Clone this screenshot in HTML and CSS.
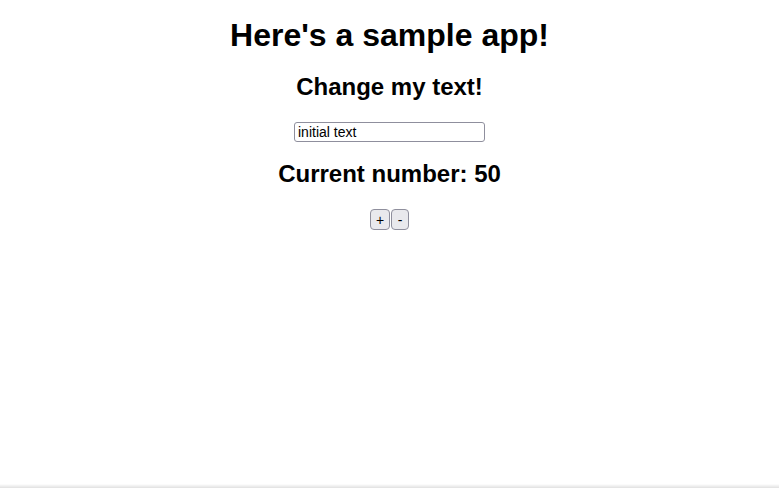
FILE: index.html
```html
<!DOCTYPE html>
<html>
<head>
<meta charset="utf-8">
<link rel="stylesheet" href="styles.css">
</head>
<body>
<div class="app">
  <h1 class="title">Here's a sample app!</h1>
  <h2 class="subtitle">Change my text!</h2>
  <input class="text-input" type="text" value="initial text">
  <h2 class="subtitle">Current number: 50</h2>
  <div class="buttons">
    <button class="btn">+</button><button class="btn">-</button>
  </div>
</div>
<div class="bottom-shade"></div>
</body>
</html>
```

FILE: styles.css
```css
html, body {
  margin: 0;
  padding: 0;
  background: #ffffff;
}
body {
  font-family: "Liberation Sans", Arial, Helvetica, sans-serif;
  color: #000;
}
.app {
  display: flex;
  flex-direction: column;
  align-items: center;
  padding-top: 8px;
}
.title {
  font-size: 32px;
  font-weight: bold;
  margin: 9px 0 0 0;
  line-height: 37px;
}
.subtitle {
  font-size: 24px;
  font-weight: bold;
  margin: 19px 0 0 0;
  line-height: 28px;
}
.text-input {
  margin-top: 21px;
  width: 191px;
  height: 20px;
  box-sizing: border-box;
  padding: 0 3px;
  border: 1px solid #8f8f9d;
  border-radius: 3px;
  font-family: "Liberation Sans", Arial, sans-serif;
  font-size: 14px;
  color: #000;
  background: #fff;
}
.text-input + .subtitle {
  margin-top: 18px;
}
.buttons {
  margin-top: 21px;
  display: flex;
  gap: 1px;
}
.btn {
  width: 20px;
  height: 21px;
  box-sizing: border-box;
  padding: 0;
  margin: 0;
  border: 1px solid #8f8f9d;
  border-radius: 4px;
  background: #e9e9ed;
  font-family: "Liberation Sans", Arial, sans-serif;
  font-size: 14px;
  color: #000;
}
.btn + .btn {
  width: 18px;
}
.bottom-shade {
  position: fixed;
  left: 0;
  right: 0;
  bottom: 0;
  height: 4px;
  background: linear-gradient(to bottom, rgba(0,0,0,0), rgba(0,0,0,0.12));
}
```
